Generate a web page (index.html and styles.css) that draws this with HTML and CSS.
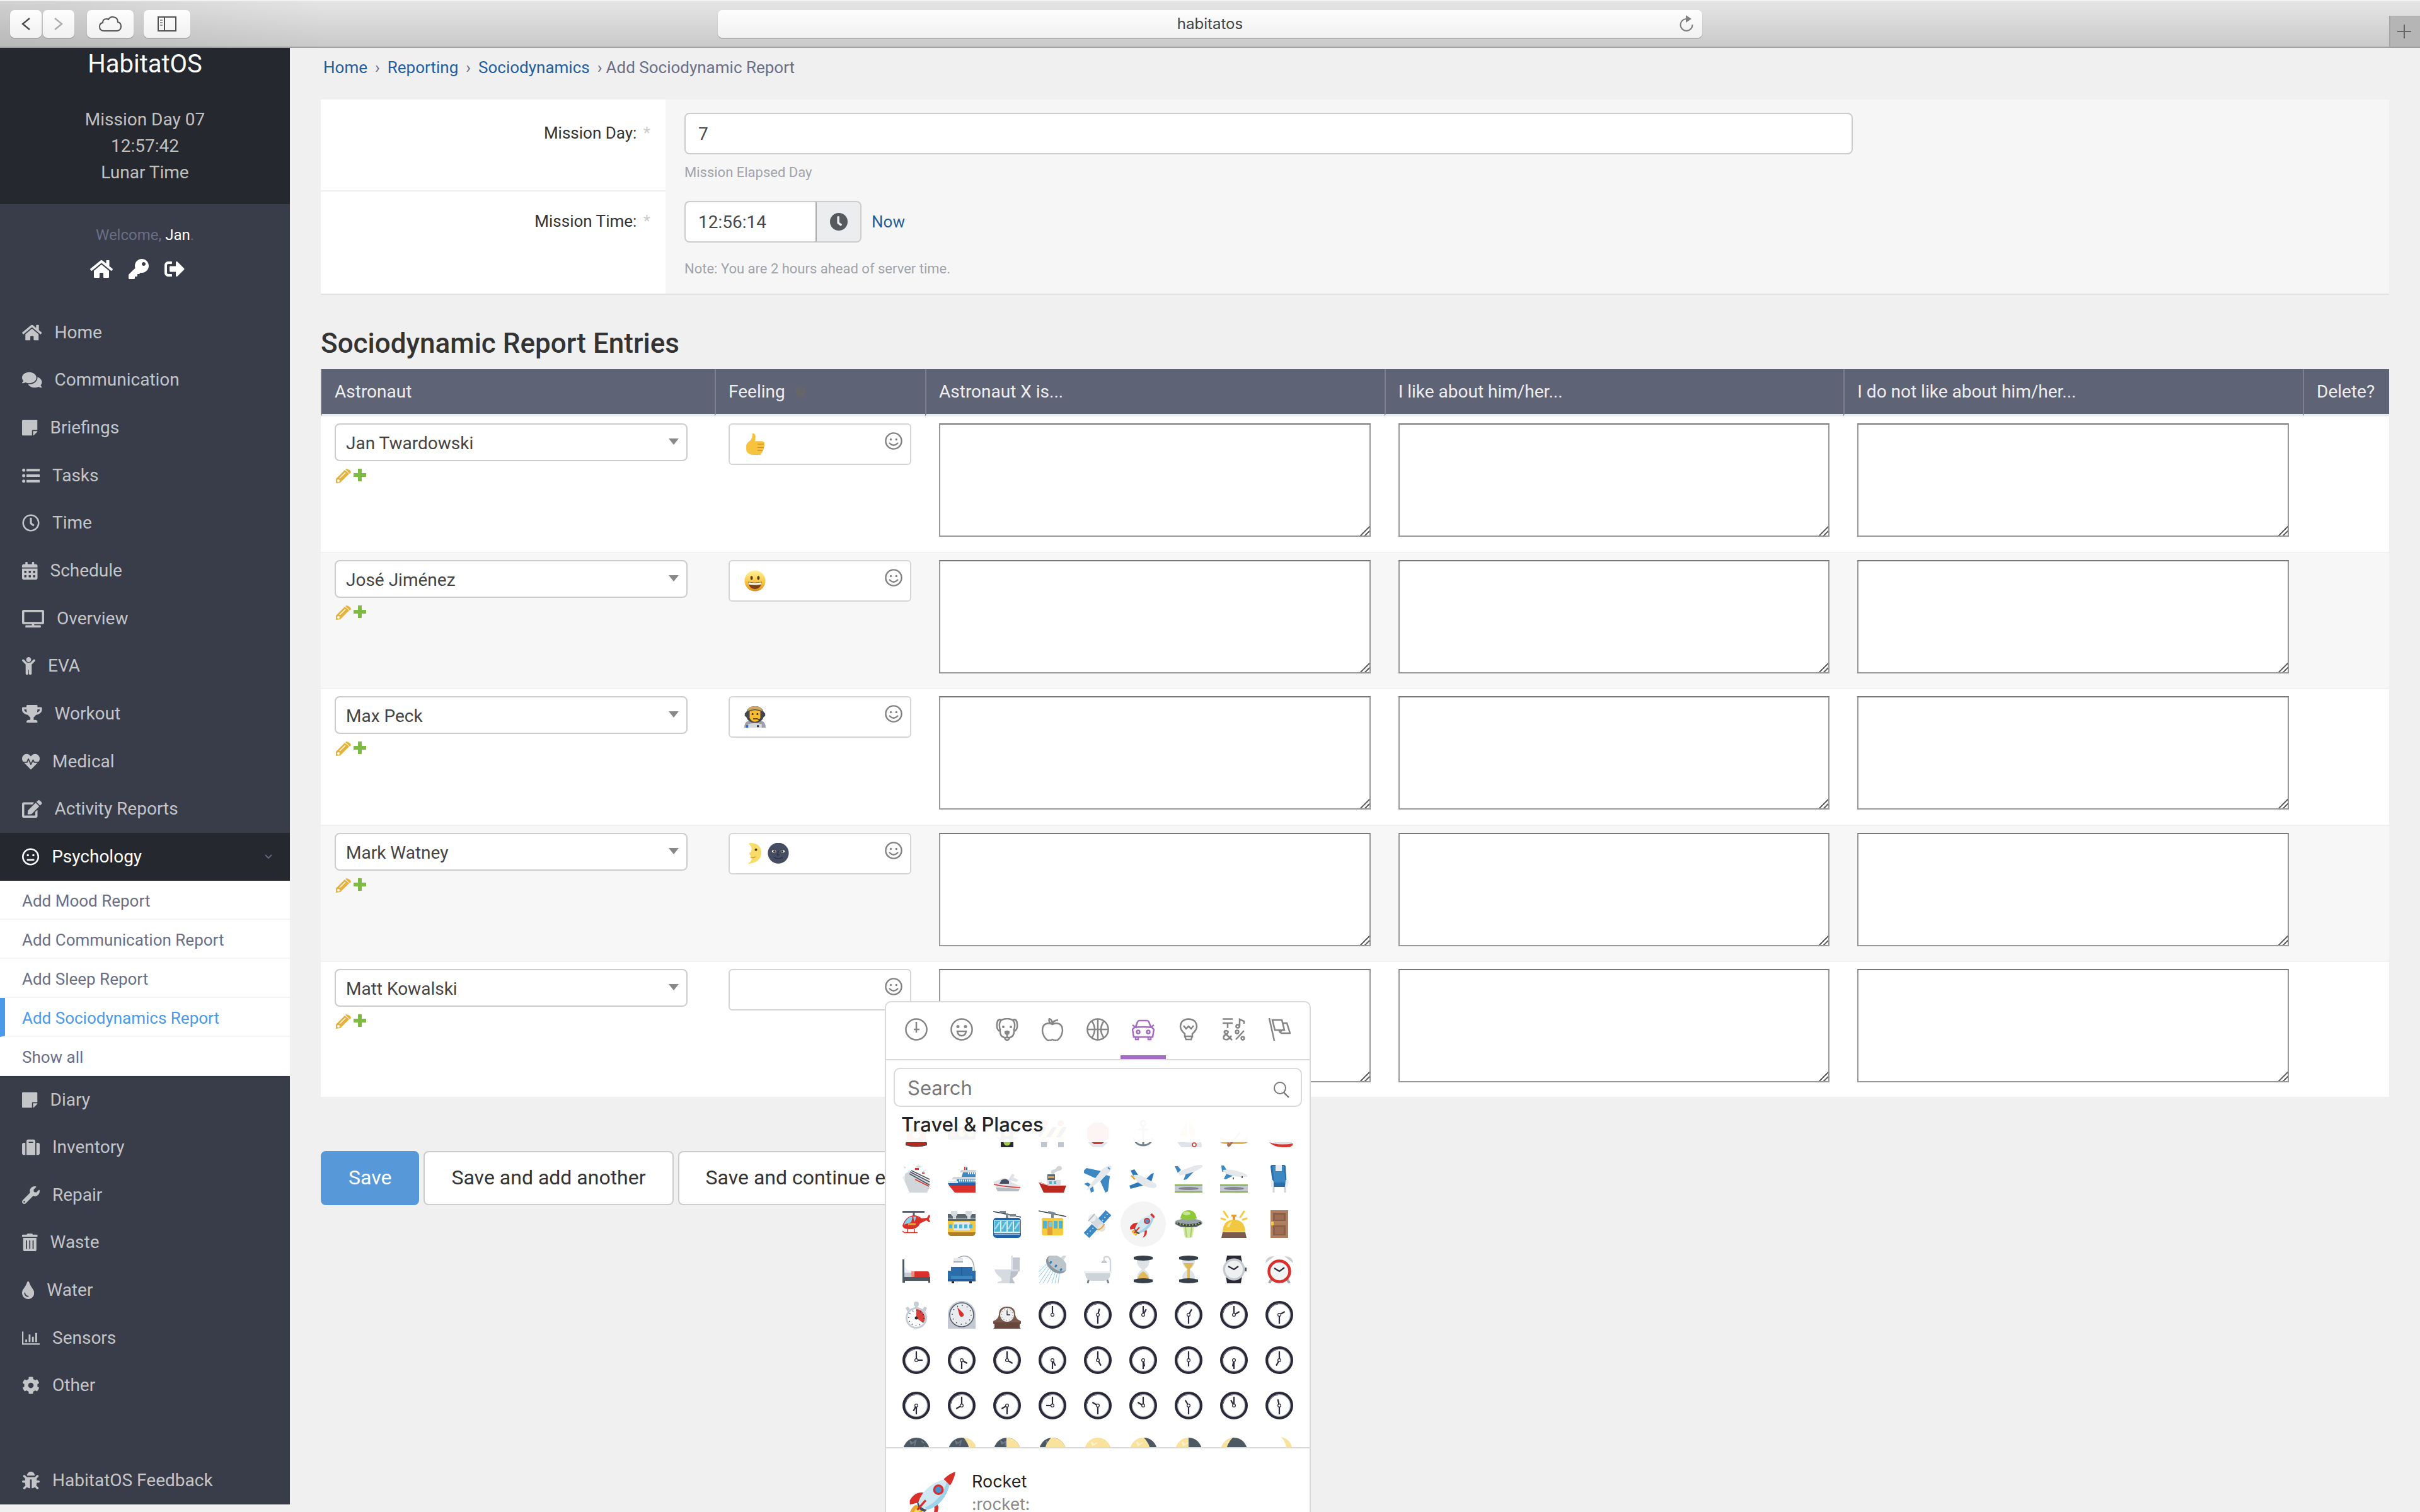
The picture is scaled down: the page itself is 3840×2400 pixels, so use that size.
FILE: index.html
```html
<!DOCTYPE html>
<html lang="en">
<head>
<meta charset="utf-8">
<title>HabitatOS</title>
<link rel="stylesheet" href="styles.css">
</head>
<body>
<svg class="sprite" aria-hidden="true">
  <symbol id="home" viewBox="0 0 576 512"><path d="M280.370 148.260L96 300.110V464a16 16 0 0 0 16 16l112.060-.29a16 16 0 0 0 15.920-16V368a16 16 0 0 1 16-16h64a16 16 0 0 1 16 16v95.640a16 16 0 0 0 16 16.050L464 480a16 16 0 0 0 16-16V300L295.670 148.260a12.190 12.190 0 0 0-15.300 0zM571.600 251.470L488 182.560V44.050a12 12 0 0 0-12-12h-56a12 12 0 0 0-12 12v72.610L318.470 43a48 48 0 0 0-61 0L4.340 251.470a12 12 0 0 0-1.600 16.900l25.500 31A12 12 0 0 0 45.150 301l235.220-193.740a12.190 12.190 0 0 1 15.300 0L530.900 301a12 12 0 0 0 16.900-1.600l25.500-31a12 12 0 0 0-1.700-16.930z"/></symbol>
  <symbol id="note" viewBox="0 0 448 512"><path d="M312 320h136V56c0-13.300-10.700-24-24-24H24C10.700 32 0 42.700 0 56v400c0 13.300 10.700 24 24 24h264V344c0-13.200 10.800-24 24-24zm129 55l-98 98c-4.500 4.500-10.600 7-17 7h-6V352h128v6.100c0 6.300-2.500 12.400-7 16.900z"/></symbol>
  <symbol id="pencil" viewBox="0 0 24 23"><path fill="#e6b23e" d="M0 23v-7L14 2l7 6L7 22zM15 1l2-1q7 2 7 6l-2 2z"/><path stroke="#fff" stroke-width="1.400" d="M6 15l9-9"/><circle cx="4" cy="19" r="2" fill="#fff"/></symbol>
  <symbol id="plus" viewBox="0 0 20 20"><path fill="#7ebb42" d="M7 0h6v7h7v6h-7v7H7v-7H0V7h7z"/></symbol>
  <symbol id="smile" viewBox="0 0 28 28"><g fill="none" stroke="#828282" stroke-width="2.400"><circle cx="14" cy="14" r="12.600"/><path d="M7.600 17.500q6.400 6.400 12.800 0" stroke-linecap="round"/></g><circle cx="9.500" cy="11.500" r="1.700" fill="#828282"/><circle cx="18.300" cy="11.500" r="1.700" fill="#828282"/></symbol>

  <!-- clock parts -->
  <symbol id="face" viewBox="0 0 44 44"><circle cx="22" cy="22" r="18" fill="#fff" stroke="#a9b4b8" stroke-width="2.400"/><circle cx="22" cy="22" r="20" fill="none" stroke="#2b2937" stroke-width="4"/><path d="M5 19A17 17 0 0 1 20 5" fill="none" stroke="#55525f" stroke-width="1"/></symbol>
  <symbol id="hub" viewBox="0 0 44 44"><circle cx="22" cy="22" r="2.400" fill="#fff" stroke="#2b2937" stroke-width="1.200"/></symbol>

  <!-- traffic and boats -->
  <symbol id="e-light" viewBox="0 0 44 44"><path d="M9 14q2-4 5-4h16q4 0 5 4l4 24H5z" fill="#d9362f"/><path d="M5 37h34v4q-17 5-34 0z" fill="#454d57"/><path d="M7 35h30l1 5q-16 4-32 0z" fill="#b8281f"/><circle cx="22" cy="24" r="6" fill="#fff" opacity=".8"/></symbol>
  <symbol id="e-hlight" viewBox="0 0 44 44"><rect y="12" width="44" height="20" rx="3" fill="#2b2937"/><circle cx="8" cy="22" r="5.500" fill="#d9362f"/><circle cx="22" cy="22" r="5.500" fill="#f2c843"/><circle cx="36" cy="22" r="5.500" fill="#83bf4f"/></symbol>
  <symbol id="e-vlight" viewBox="0 0 44 44"><path d="M6 12l6 4v-4zM38 12l-6 4v-4zM4 28l8 5v-5zM40 28l-8 5v-5z" fill="#75908f"/><rect x="12" width="20" height="44" fill="#2b2937"/><circle cx="22" cy="7" r="5" fill="#d9362f"/><circle cx="22" cy="22" r="5" fill="#f2c843"/><circle cx="22" cy="36" r="5.500" fill="#9ccc3f"/></symbol>
  <symbol id="e-barrier" viewBox="0 0 44 44"><circle cx="10" cy="6" r="5" fill="#d9362f"/><circle cx="35" cy="6" r="5" fill="#d9362f"/><path fill="#c0c6d0" d="M4 28h9v16H4zM31 28h9v16h-9z"/><path fill="#ffe062" d="M0 12h44v16H0z"/><path fill="#2b2937" d="M6 12h7L3 28H0v-6zM22 12h7L19 28h-7zM38 12h6v2l-9 14h-7z"/></symbol>
  <symbol id="e-stop" viewBox="0 0 44 44"><path fill="#e3e6ea" d="M14 44L2 32V12L14 2h16l12 10v20L30 44z"/><path fill="#d9362f" d="M16 39L5 30V14l10-9h14l10 9v16L28 39z"/></symbol>
  <symbol id="e-anchor" viewBox="0 0 44 44"><g fill="none" stroke="#75848d" stroke-width="3"><circle cx="22" cy="6" r="4"/><path d="M22 10v31M13 16h18M7 29q3 12 15 12t15-12"/></g></symbol>
  <symbol id="e-sail" viewBox="0 0 44 44"><path fill="#f2c87e" d="M20 2l-14 24h14zM23 2q12 14 10 25l-10-1z"/><path fill="#dfe4e8" d="M3 34q20 4 39 2l1 8H10z"/><circle cx="31" cy="40" r="3" fill="#fff" stroke="#d9362f" stroke-width="1.600"/></symbol>
  <symbol id="e-canoe" viewBox="0 0 44 44"><path fill="#e8b24d" d="M0 26q8 6 16 6h14q8 0 14-6v10q-4 3-10 3H10q-6 0-10-3z"/><path d="M32 20L14 42" stroke="#a97155" stroke-width="3"/><path d="M12 36l6 4-5 4-2-3z" fill="#a97155"/></symbol>
  <symbol id="e-speed" viewBox="0 0 44 44"><path fill="#dce3e6" d="M0 26q12-2 20 6l22 4v4H18z"/><path fill="#d9362f" d="M6 36q16 6 38 2-1 6-10 6-20 1-28-8z"/></symbol>

  <symbol id="e-cruise" viewBox="0 0 44 44"><path fill="#e6eaec" d="M0 20l12-12 3 36H12z"/><path fill="#d0d6d9" d="M4 14l8-4 31 18v8l-4 8H11L4 26z"/><path stroke="#4b5563" stroke-width="1.600" d="M14 9l29 14M12 11l31 16M11 14l32 18"/><path stroke="#d9362f" stroke-width="1.400" d="M20 23l22 11"/><path fill="#d9362f" d="M20 5h6v3h-6zM31 12h4v2h-4z"/><path fill="#d5dbe0" d="M21 4q2-5 8-2l1 2zM32 11q2-4 5-1zM2 2l4 2-3 2z"/></symbol>
  <symbol id="e-ferry" viewBox="0 0 44 44"><path fill="#d9362f" d="M26 3h2v6h-2z"/><path fill="#2f6fae" d="M29 4h2v5h-2z"/><path fill="#d0d6d9" d="M21 8h23v4H19zM9 19h35v4H6z"/><path fill="#3b88c3" d="M24 12h20v7H22zM14 23h30v7H14z"/><path d="M32 13.500h12M18 25h26" stroke="#eef2f4" stroke-width="3" stroke-dasharray="2 1"/><path fill="#dde5ea" d="M0 26h16v3H0z"/><path fill="#2a62a8" d="M0 29h44v4H2z"/><path fill="#d9302c" d="M2 33h42v11H11z"/></symbol>
  <symbol id="e-motor" viewBox="0 0 44 44"><path fill="#dfe3e8" d="M24 24l6-10 4 2-2 4 8 4-3 3zM0 27l16-6q10 1 14 7l14 6-4 8H8z"/><path d="M13 24q8-4 12 2v4H10z" fill="#454d62"/><path d="M1 31q18 4 42 5" stroke="#d9362f" stroke-width="1.500" fill="none"/><path d="M4 36l3 6h33l2-4z" fill="#b5bcc2"/></symbol>
  <symbol id="e-tug" viewBox="0 0 44 44"><path fill="#cfd6da" d="M20 14q-2-7 7-7 2-6 8-5 5 4-1 7-5 1-8 3l-2 3z"/><path fill="#5a6670" d="M14 15h12v12H14z"/><path fill="#e8a23a" d="M15 18h10v3H15z"/><path fill="#d5dbe0" d="M14 24h21v9H14z"/><path fill="#4fb3d3" d="M17 26h4v4h-4zM24 26h4v4h-4z"/><path fill="#b8281f" d="M0 27l16 5h28l-4 12H8z"/><path d="M0 28l16 4.500h28" fill="none" stroke="#f0dede"/></symbol>
  <symbol id="e-plane" viewBox="0 0 44 44"><path fill="#3b88c3" d="M0 9l4-4 24 5-8 12-20-9zM35 16l-9 10 8 18 4-2 3-24zM0 30l6-2 8 5 2 9-5 2-2-8z"/><path fill="#e4e8eb" d="M4 39L28 8Q36 0 43 1q2 7-6 14L12 36q-6 5-8 3z"/><path d="M38 4l3 3" stroke="#3b88c3" stroke-width="2"/></symbol>
  <symbol id="e-splane" viewBox="0 0 44 44"><path fill="#2f78bb" d="M2 9l6-2 6 9-7 3zM0 33l18-7 10 5-26 7zM27 22l8-8 4-1-5 17z"/><path fill="#e4e8eb" d="M6 16q12-1 20 5l16 9q4 6-4 7-13-1-24-9z"/><path stroke="#e8a23a" stroke-width="2.500" d="M3 17l6 6"/></symbol>
  <symbol id="e-depart" viewBox="0 0 44 44"><path fill="#3b88c3" d="M0 2h5l5 6-5 5zM20 8l12 1-13 14-5 1z"/><path fill="#e4e8eb" d="M5 12Q26 2 37 0q8-1 7 3Q34 12 8 17z"/><path fill="#83b24a" d="M0 31h44v13H0z"/><path fill="#c4c8d3" d="M0 33h44v9H0z"/><ellipse cx="22" cy="37.500" rx="16" ry="2.600" fill="#84868f"/></symbol>
  <symbol id="e-arrive" viewBox="0 0 44 44"><path fill="#3b88c3" d="M2 1h4l5 8-8 2zM13 9l10 2 2 4-16 8-3-1z"/><path fill="#e4e8eb" d="M4 8q16-2 33 5 8 3 6 6-16 2-34-5z"/><path d="M21 20v3M35 18v3" stroke="#565a66" stroke-width="2"/><path fill="#83b24a" d="M0 31h44v13H0z"/><path fill="#c4c8d3" d="M0 33h44v9H0z"/><ellipse cx="22" cy="37.500" rx="16" ry="2.600" fill="#84868f"/></symbol>
  <symbol id="e-seat" viewBox="0 0 44 44"><path d="M13 34v10M31 34v10" stroke="#cfd5da" stroke-width="3"/><path fill="#2b6cab" d="M8 3q0-3 3-3h18q3 0 3 3l2 32H12z"/><path fill="#3b88c3" d="M11 2h18l3 26H14z"/><path fill="#e8edf1" d="M16 0h10v10H16zM8 24q4-2 5 3v8H9zM32 24q5-1 5 3l-2 8h-4z"/></symbol>

  <symbol id="e-heli" viewBox="0 0 44 44"><path stroke="#55606c" stroke-width="3" d="M0 2.500h35M18 2v8"/><path fill="#d9302c" d="M0 24Q6 8 20 8q8 2 10 5l9-1 3-5 2 2-2 5 2 4-2 1-4-3-10 5q-4 8-12 9H8q-8-1-8-6z"/><path fill="#8bd0ea" d="M2 23Q7 10 16 10l-2 9zM17 10h5l-3 9z"/><path stroke="#e8a23a" stroke-width="3" d="M9 22h12"/><path fill="none" stroke="#d9302c" stroke-width="1.500" d="M8 30v5M19 30v5M0 33l3 2.500h21"/></symbol>
  <symbol id="e-susp" viewBox="0 0 44 44"><path fill="#59656f" d="M0 6h44v6H0zM0 13h44v5H0z"/><path fill="#d5dade" d="M5 1h10v6l-2 3v4H8v-4L5 7zM28 1h10v6l-2 3v4h-5v-4l-3-3z"/><path fill="#f2c843" d="M0 17h44v18q0 5-5 5H5q-5 0-5-5z"/><path fill="#b17e22" d="M0 35h44q-1 6-6 6H6q-5 0-6-6z"/><path fill="#e4e8eb" d="M9 19h26v13H9z"/><path d="M2 25.500h40" stroke="#4fb3d3" stroke-width="6" stroke-dasharray="5 3"/></symbol>
  <symbol id="e-cable" viewBox="0 0 44 44"><path stroke="#35404a" stroke-width="1.500" d="M0 2l44 9"/><path d="M10 3h10M26 8h10M22 5v9" stroke="#7b8790" stroke-width="4"/><rect y="12" width="44" height="32" rx="5" fill="#2463a5"/><path fill="#e4edf2" d="M1 16h42v20H1z"/><path fill="#4fb3d3" d="M2 17h9v17H2zM13 17h8v17h-8zM23 17h8v17h-8zM33 17h9v17h-9z"/><path stroke="#a5dced" stroke-width="2.500" d="M3 30l7-11M14 30l6-11M24 30l6-11M34 30l7-11"/><path stroke="#fff" d="M2 38h40"/></symbol>
  <symbol id="e-tram" viewBox="0 0 44 44"><path stroke="#35404a" stroke-width="1.500" d="M0 1l44 9"/><path d="M15 3l12 3M22 4v9" stroke="#7b8790" stroke-width="4"/><rect x="5" y="12" width="34" height="28" rx="3" fill="#f5cb3f"/><path fill="#4fb3d3" d="M7 17h6v12H7zM24 17h6v12h-6zM32 17h6v12h-6z"/><path fill="#e29b36" d="M14 17h8v22h-8z"/><path fill="#7ac7dd" d="M16 19h5v7h-5z"/></symbol>
  <symbol id="e-sat" viewBox="0 0 44 44"><path stroke="#3b88c3" stroke-width="12" d="M4 40l13-14M27 17L39 4"/><path stroke="#bfe0f5" stroke-width="2" stroke-dasharray="2 4" d="M5 38l11-11M29 17L38 5"/><path stroke="#d3d9de" stroke-width="13" d="M13 12l16 16"/><circle cx="13" cy="12" r="6" fill="#eceff1"/><path d="M7 17L17 6" stroke="#b5bcc2" stroke-width="2"/><circle cx="28" cy="28" r="6" fill="#e9e2d8"/><path d="M21 31q8-1 11-9" stroke="#e8a23a" stroke-width="2" fill="none"/></symbol>
  <symbol id="e-rocket" viewBox="0 0 44 44"><path fill="#d9302c" d="M15 20Q6 18 1 27v4l9-2zM24 33q1 5-3 11 7-3 7-11l-2-4z"/><path fill="#f2a52c" d="M7 31q-6 3-7 13 10-1 13-7z"/><path fill="#fbdc5a" d="M8 34q-3 2-4 7 6-2 7-5z"/><path fill="#484f5a" d="M8 29l3-3 8 8-4 4q-7-2-7-9z"/><path fill="#cfe9f4" d="M9 29Q14 13 34 7l4 5q-4 19-21 24-7-2-8-7z"/><path fill="#9fd3ea" d="M36 9l3 2q-5 20-21 25l-3-2Q32 26 36 9z"/><path fill="#d9302c" d="M44 0q-6 2-11 7l6 6q4-6 5-13z"/><circle cx="28" cy="17" r="5" fill="#d9302c"/><circle cx="28" cy="17" r="3" fill="#4a8fd0"/><path stroke="#d9302c" stroke-width="2" d="M8 36l8-9"/></symbol>
  <symbol id="e-ufo" viewBox="0 0 44 44"><path fill="#d4eaa8" d="M13 26h18l-3 17q-6 2-12 0z"/><path stroke="#a8cf64" stroke-width="2" d="M17 27l2 16M27 27l-2 16"/><ellipse cx="22" cy="20" rx="22" ry="7" fill="#97a2a8"/><path d="M2 22q20 8 40 0l-8 5H10z" fill="#616d74"/><path d="M2 20q20 8 40 0" stroke="#3e444c" stroke-width="4" fill="none"/><path d="M3 20q19 7 38 0" stroke="#b4d94f" stroke-width="2" stroke-dasharray="2 3" fill="none"/><path fill="#8fc93a" d="M9 13Q11 0 22 0t13 13q-13 5-26 0z"/><ellipse cx="19" cy="5" rx="6" ry="3" fill="#c5e68c"/></symbol>
  <symbol id="e-bell" viewBox="0 0 44 44"><path stroke="#f5c944" stroke-width="3" stroke-linecap="round" d="M6 2l6 9M38 2l-6 9M2 13l6 2M42 13l-6 2"/><path fill="#e29b36" d="M18 7h8v3h-2v6h-4v-6h-2z"/><path fill="#f2c843" d="M4 34q1-19 18-19t18 19z"/><path fill="#fbe38a" d="M10 27q2-8 9-9-3 4-4 9z"/><path fill="#7a5a4d" d="M4 35h36l2 9H2z"/></symbol>
  <symbol id="e-door" viewBox="0 0 44 44"><path fill="#b07f5f" d="M8 0h28v44H8z"/><path fill="#8a6048" d="M12 4h20v13H12zM12 24h20v16H12z"/><path fill="#9d6e53" d="M15 7h14v8H15zM15 27h14v11H15z"/><path fill="#f2c843" d="M9 18h4v6H9z"/></symbol>

  <symbol id="e-bed" viewBox="0 0 44 44"><path fill="#4d5962" d="M0 6h3v28h41v9h-3v-3H4v3H0z"/><path fill="#c4cad3" d="M3 26h16v8H3z"/><path fill="#eef1f3" d="M3 17l5 6 6 1q3 2 0 3H3z"/><path fill="#d9302c" d="M18 25h22q3 0 3 9H18z"/><path fill="#ea8d7e" d="M14 25h5v9h-5z"/></symbol>
  <symbol id="e-couch" viewBox="0 0 44 44"><path d="M16 4Q26-2 34 3t8 21" fill="none" stroke="#a3acb2" stroke-width="1.600"/><path fill="#e4e8eb" d="M9 4h15v6H9z"/><path fill="#a3acb2" d="M9 9h15v2H9z"/><path fill="#2b6cab" d="M5 18h34v15H5zM0 24h5v16H0zM39 24h5v16h-5z"/><path fill="#3b88c3" d="M5 32h34v5H5z"/><path fill="#245d98" d="M0 37h44v4H0zM21 18h2v14h-2z"/><path fill="#2b2937" d="M6 41h4v3H6zM34 41h4v3h-4z"/></symbol>
  <symbol id="e-toilet" viewBox="0 0 44 44"><path fill="#dfe3e8" d="M28 0h3v22h-3z"/><path fill="#c4c8d3" d="M31 3h11v22H31z"/><path fill="#d5dbe0" d="M2 22h38q-2 9-10 14l4 6v2H7v-2l6-2q1-4-2-6-7-4-9-12z"/><path fill="#b9c0ca" d="M28 25h12q-2 8-10 11l4 8h-8z"/></symbol>
  <symbol id="e-shower" viewBox="0 0 44 44"><path stroke="#8cc8ea" stroke-width="1" d="M13 13L0 26M15 16L0 34M18 18L1 44M21 21L7 44M24 23L14 44M27 25l-6 19M30 26l-4 18M33 28l-2 16"/><path fill="#d3d9dd" d="M34 4l5-4h5L40 7z"/><ellipse cx="28" cy="14" rx="18" ry="12" transform="rotate(38 28 14)" fill="#8b979e"/><ellipse cx="30" cy="12" rx="17" ry="10" transform="rotate(38 30 12)" fill="#bcc5ca"/><path stroke="#2f78bb" stroke-width="4" stroke-dasharray="3 7" d="M18 10l20 14"/></symbol>
  <symbol id="e-bath" viewBox="0 0 44 44"><path d="M42 26V8q-2-9-10-5v6" fill="none" stroke="#d0d6da" stroke-width="2.400"/><path fill="#c4cbd0" d="M27 12l2-4h6l2 4z"/><path d="M8 36l-2 8M36 36l3 8" stroke="#7b8790" stroke-width="3"/><path fill="#cdd4d8" d="M2 27h40q0 13-11 13H13Q2 40 2 27z"/><path fill="#eceff1" d="M0 25h44v3H0z"/></symbol>
  <symbol id="e-hour" viewBox="0 0 44 44"><path fill="#dde3e7" d="M12 6h20q1 10-8 16 9 6 8 16H12q-1-10 8-16-9-6-8-16z"/><path fill="#e2b95a" d="M13 37q2-8 9-12 7 4 9 12z"/><path fill="#37404a" d="M7 2q15-4 30 0v4q-15 4-30 0zM7 38q15-4 30 0v4q-15 4-30 0z"/></symbol>
  <symbol id="e-hourf" viewBox="0 0 44 44"><path fill="#dde3e7" d="M12 6h20q1 10-8 16 9 6 8 16H12q-1-10 8-16-9-6-8-16z"/><path fill="#e2b95a" d="M14 12h16q-2 5-6 9v16h-4V21q-4-4-6-9z"/><path fill="#37404a" d="M7 2q15-4 30 0v4q-15 4-30 0zM7 38q15-4 30 0v4q-15 4-30 0z"/></symbol>
  <symbol id="e-watch" viewBox="0 0 44 44"><path fill="#2b2937" d="M11 0h22l2 12v20l-2 12H11L9 32V12z"/><path fill="#454d57" d="M38 19h4v6h-4z"/><circle cx="22" cy="22" r="17.500" fill="#c3cbcf"/><circle cx="22" cy="22" r="14" fill="#eef0f2"/><path d="M13 17l9 5 7-5" fill="none" stroke="#2b2937" stroke-width="2.200"/></symbol>
  <symbol id="e-alarm" viewBox="0 0 44 44"><path d="M9 38l-3 6M35 38l3 6" stroke="#a3acb2" stroke-width="4"/><path fill="#c9d0d4" d="M0 12Q1 1 14 1zM44 12Q43 1 30 1z"/><circle cx="22" cy="25" r="16.500" fill="#f1f3f5" stroke="#d9302c" stroke-width="4.500"/><path d="M14 20l8 5 8-6" fill="none" stroke="#2b2937" stroke-width="2.200"/></symbol>

  <symbol id="e-stopw" viewBox="0 0 44 44"><circle cx="22" cy="5" r="4" fill="#c5ccd3"/><path fill="#c5ccd3" d="M20 6h4v6h-4zM5 11l4-2 3 4-4 4zM39 11l-4-2-3 4 4 4z"/><circle cx="22" cy="27" r="15.500" fill="#fff" stroke="#c5ccd9" stroke-width="3"/><path fill="#d9403a" d="M22 27V13a14 14 0 0 1 11 22z"/><circle cx="22" cy="27" r="12" fill="none" stroke="#2b2937" stroke-width="2" stroke-dasharray="1 5.280"/><circle cx="22" cy="27" r="2.500" fill="#2b2937"/></symbol>
  <symbol id="e-timer" viewBox="0 0 44 44"><path fill="#c4c8d3" d="M0 22a22 22 0 0 1 44 0v22H0z"/><circle cx="22" cy="22" r="19" fill="#e9ecee" stroke="#53606a" stroke-width="1.600"/><circle cx="22" cy="22" r="15" fill="none" stroke="#2b2937" stroke-width="1.600" stroke-dasharray="1.300 6.554"/><path fill="#d9302c" d="M15 10l9 9q3 4-1 6-4 1-5-4z"/></symbol>
  <symbol id="e-mantel" viewBox="0 0 44 44"><path fill="#7a5a4d" d="M9 22Q9 9 22 9t13 13q1 7 9 10v4H0v-4q8-3 9-10z"/><path fill="#66483c" d="M0 34h44v2l-2 1v5l2 2H0l2-2v-5l-2-1z"/><circle cx="22" cy="22" r="11" fill="#eef0f2"/><circle cx="22" cy="22" r="9" fill="none" stroke="#2b2937" stroke-dasharray="1 3.710"/><path d="M22 15v7h5" fill="none" stroke="#2b2937" stroke-width="1.300"/></symbol>

  <!-- moon phases -->
  <symbol id="m-dark" viewBox="0 0 44 44"><circle cx="22" cy="22" r="21" fill="#4c5964"/><path d="M14 12l-2-6 4 4 5-4-2 8M30 6l4 4M34 14l3 3" stroke="#6f7b85" stroke-width="2" fill="none"/></symbol>
  <symbol id="m-full" viewBox="0 0 44 44"><circle cx="22" cy="22" r="21" fill="#f9e29c"/><path d="M14 14l-2-6 4 4 5-3" stroke="#fff1d0" stroke-width="2" fill="none"/></symbol>

  <!-- faces shown inside the feeling fields -->
  <symbol id="f-thumb" viewBox="0 0 44 44"><path fill="#f7c33f" d="M17 0q5-1 6 6 0 6-1 10h14q7 1 5 6 2 4-1 7 1 4-2 6 0 4-3 5 0 4-4 4H19Q4 43 4 33V24q2-5 9-10 4-6 4-14z"/><path fill="none" stroke="#c98a22" stroke-width="1.500" d="M27 22h13M27 29h13M27 35h11"/></symbol>
  <symbol id="f-grin" viewBox="0 0 44 44"><defs><linearGradient id="g1" x2="0" y2="1"><stop stop-color="#fff39a"/><stop offset=".6" stop-color="#f7c33f"/><stop offset="1" stop-color="#dd8a1f"/></linearGradient></defs><circle cx="22" cy="22" r="21.500" fill="url(#g1)"/><ellipse cx="15" cy="16" rx="2.500" ry="4" fill="#5f3d11"/><ellipse cx="29" cy="16" rx="2.500" ry="4" fill="#5f3d11"/><path fill="#7a4410" d="M8 24q14 3 28 0-2 15-14 15T8 24z"/><path fill="#fff" d="M9 25q13 3 26 0v4q-13 3-26 0z"/></symbol>
  <symbol id="f-astro" viewBox="0 0 44 44"><path fill="#9da0a8" d="M0 44q0-11 8-14h28q8 3 8 14z"/><path fill="#43464d" d="M4 12Q8 0 22 0t18 12l3 3v5l-3 2q-4 12-18 12T4 22l-3-2v-5z"/><path fill="#d0a862" d="M6 10Q9 0 22 0t16 10q-16-7-32 0z"/><path fill="#f9bd2d" d="M11 10q11-4 22 0v14q-4 8-11 8t-11-8z"/><circle cx="17" cy="16" r="2" fill="#4b2e0d"/><circle cx="27" cy="16" r="2" fill="#4b2e0d"/><path d="M18 26h9l6 3" stroke="#3a2a1c" stroke-width="2" fill="none"/><path fill="#d5d7dc" d="M8 37q14-5 28 0v7H8z"/><path fill="#2d63d0" d="M4 39h4v5H4z"/><path fill="#33363c" d="M26 39h4v4h-4z"/></symbol>
  <symbol id="f-moon" viewBox="0 0 44 44"><path fill="#f8dc67" d="M12 0q22 0 23 20 0 20-28 23 9-6 8-11l-4-3 3-2q-4-4-4-6 5-2 5-9 0-6-6-10z"/><circle cx="24" cy="14" r="2.600" fill="#4b3a12"/><path d="M14 29q6 3 9-1" stroke="#c79a2c" stroke-width="2" fill="none"/></symbol>
  <symbol id="f-dark" viewBox="0 0 44 44"><circle cx="22" cy="21" r="21.500" fill="#454d63"/><ellipse cx="13" cy="17" rx="4" ry="2.600" fill="#fff"/><ellipse cx="31" cy="17" rx="4" ry="2.600" fill="#fff"/><circle cx="14" cy="17" r="2.200" fill="#3c2a26"/><circle cx="30" cy="17" r="2.200" fill="#3c2a26"/><path d="M22 16l-2 9h4M13 29q9 7 18 0" stroke="#2d3344" stroke-width="1.800" fill="none"/></symbol>
</svg>

<header class="toolbar">
  <div class="tools">
    <button class="tool tool-narrow" aria-label="Back"><svg viewBox="0 0 14 20" width="14" height="20"><path d="M13 1L2 10l11 9" fill="none" stroke="#4a4a4a" stroke-width="2.400"/></svg></button>
    <button class="tool tool-narrow" aria-label="Forward"><svg viewBox="0 0 14 20" width="14" height="20"><path d="M1 1l11 9-11 9" fill="none" stroke="#ababab" stroke-width="2.400"/></svg></button>
    <button class="tool tool-cloud" aria-label="iCloud tabs"><svg viewBox="0 0 36 26" width="36" height="26"><path d="M8 24q-7 0-7-7 0-5 5-6 0-6 6-6 2 0 3 1 3-5 8-4 7 1 7 8 5 1 5 7t-6 7z" fill="none" stroke="#555" stroke-width="2"/></svg></button>
    <button class="tool" aria-label="Show sidebar"><svg viewBox="0 0 30 24" width="30" height="24"><path d="M1 1h28v22H1zM11 1v22" fill="none" stroke="#4f4f4f" stroke-width="2"/><path d="M4 6h4M4 10h4M4 14h4" stroke="#777" stroke-width="1.600"/></svg></button>
  </div>
  <div class="address"><span>habitatos</span><button class="reload" aria-label="Reload"><svg viewBox="0 0 24 28" width="24" height="28"><path d="M11 6A9.500 9.500 0 1 0 21.500 15" fill="none" stroke="#808080" stroke-width="2.200"/><path d="M11 0l9 6-9 6z" fill="#808080"/></svg></button></div>
  <button class="newtab" aria-label="New tab"><svg viewBox="0 0 22 22" width="22" height="22"><path d="M11 0v22M0 11h22" stroke="#666" stroke-width="2"/></svg></button>
</header>

<div class="layout">
<aside class="sidebar">
  <div class="brand">
    <h1>HabitatOS</h1>
    <p>Mission Day 07<br>12:57:42<br>Lunar Time</p>
  </div>
  <p class="welcome">Welcome, <b>Jan</b>.</p>
  <div class="user-links">
    <a href="#" aria-label="View site"><svg viewBox="0 0 576 512"><use href="#home"/></svg></a>
    <a href="#" aria-label="Change password"><svg viewBox="0 0 512 512"><path d="M512 176.001C512 273.203 433.202 352 336 352c-11.220 0-22.190-1.062-32.827-3.069l-24.012 27.014A23.999 23.999 0 0 1 261.223 384H224v40c0 13.255-10.745 24-24 24h-40v40c0 13.255-10.745 24-24 24H24c-13.255 0-24-10.745-24-24v-78.059c0-6.365 2.529-12.470 7.029-16.971l161.802-161.802C163.108 213.814 160 195.271 160 176 160 78.798 238.797.001 335.999 0 433.488-.001 512 78.511 512 176.001zM336 128c0 26.510 21.490 48 48 48s48-21.490 48-48-21.490-48-48-48-48 21.490-48 48z"/></svg></a>
    <a href="#" aria-label="Log out"><svg viewBox="0 0 512 512"><path d="M497 273L329 441c-15 15-41 4.500-41-17v-96H152c-13.300 0-24-10.700-24-24v-96c0-13.300 10.700-24 24-24h136V88c0-21.400 25.900-32 41-17l168 168c9.300 9.400 9.300 24.600 0 34zM192 436v-40c0-6.600-5.400-12-12-12H96c-17.700 0-32-14.300-32-32V160c0-17.700 14.300-32 32-32h84c6.600 0 12-5.400 12-12V76c0-6.600-5.400-12-12-12H96c-53 0-96 43-96 96v192c0 53 43 96 96 96h84c6.600 0 12-5.400 12-12z"/></svg></a>
  </div>
  <nav>
    <ul class="menu menu-main">
      <li><a href="#"><svg viewBox="0 0 576 512"><use href="#home"/></svg>Home</a></li>
      <li><a href="#"><svg viewBox="0 0 576 512"><path d="M416 192c0-88.400-93.100-160-208-160S0 103.600 0 192c0 34.300 14.100 65.900 38 92-13.400 30.200-35.500 54.200-35.800 54.500-2.200 2.300-2.800 5.700-1.500 8.700S4.800 352 8 352c36.600 0 66.900-12.300 88.700-25 32.200 15.700 70.300 25 111.300 25 114.900 0 208-71.600 208-160zm122 220c23.900-26 38-57.700 38-92 0-66.900-53.500-124.200-129.300-148.100.9 6.600 1.300 13.300 1.300 20.100 0 105.900-107.700 192-240 192-10.800 0-21.300-.8-31.700-1.900C207.800 439.600 281.800 480 368 480c41 0 79.100-9.200 111.300-25 21.800 12.700 52.100 25 88.700 25 3.200 0 6.100-1.900 7.300-4.800 1.300-2.900.7-6.300-1.500-8.700-.3-.3-22.400-24.200-35.800-54.500z"/></svg>Communication</a></li>
      <li><a href="#"><svg viewBox="0 0 448 512"><use href="#note"/></svg>Briefings</a></li>
      <li><a href="#"><svg viewBox="0 0 512 512"><circle cx="48" cy="96" r="46"/><circle cx="48" cy="256" r="46"/><circle cx="48" cy="416" r="46"/><path d="M128 60h384v72H128zM128 220h384v72H128zM128 380h384v72H128z"/></svg>Tasks</a></li>
      <li><a href="#"><svg viewBox="0 0 512 512"><path d="M256 8C119 8 8 119 8 256s111 248 248 248 248-111 248-248S393 8 256 8zm0 448c-110.500 0-200-89.500-200-200S145.500 56 256 56s200 89.500 200 200-89.500 200-200 200zm61.800-104.400l-84.900-61.700c-3.100-2.300-4.900-5.900-4.900-9.700V116c0-6.600 5.400-12 12-12h32c6.600 0 12 5.400 12 12v141.700l66.800 48.600c5.400 3.900 6.500 11.400 2.600 16.800L334.600 349c-3.900 5.300-11.400 6.500-16.800 2.600z"/></svg>Time</a></li>
      <li><a href="#"><svg viewBox="0 0 448 512"><path d="M0 464c0 26.500 21.500 48 48 48h352c26.500 0 48-21.500 48-48V192H0v272zm320-196c0-6.600 5.400-12 12-12h40c6.600 0 12 5.400 12 12v40c0 6.600-5.400 12-12 12h-40c-6.600 0-12-5.400-12-12v-40zm0 128c0-6.600 5.400-12 12-12h40c6.600 0 12 5.400 12 12v40c0 6.600-5.400 12-12 12h-40c-6.600 0-12-5.400-12-12v-40zM192 268c0-6.600 5.400-12 12-12h40c6.600 0 12 5.400 12 12v40c0 6.600-5.400 12-12 12h-40c-6.600 0-12-5.400-12-12v-40zm0 128c0-6.600 5.400-12 12-12h40c6.600 0 12 5.400 12 12v40c0 6.600-5.400 12-12 12h-40c-6.600 0-12-5.400-12-12v-40zM64 268c0-6.600 5.400-12 12-12h40c6.600 0 12 5.400 12 12v40c0 6.600-5.400 12-12 12H76c-6.600 0-12-5.400-12-12v-40zm0 128c0-6.600 5.400-12 12-12h40c6.600 0 12 5.400 12 12v40c0 6.600-5.400 12-12 12H76c-6.600 0-12-5.400-12-12v-40zM400 64h-48V16c0-8.800-7.200-16-16-16h-32c-8.800 0-16 7.200-16 16v48H160V16c0-8.800-7.200-16-16-16h-32c-8.800 0-16 7.200-16 16v48H48C21.500 64 0 85.500 0 112v48h448v-48c0-26.500-21.500-48-48-48z"/></svg>Schedule</a></li>
      <li><a href="#"><svg viewBox="0 0 640 512"><path d="M592 0H48A48 48 0 0 0 0 48v320a48 48 0 0 0 48 48h240v32H112a16 16 0 0 0-16 16v32a16 16 0 0 0 16 16h416a16 16 0 0 0 16-16v-32a16 16 0 0 0-16-16H352v-32h240a48 48 0 0 0 48-48V48a48 48 0 0 0-48-48zm-16 352H64V64h512z"/></svg>Overview</a></li>
      <li><a href="#"><svg viewBox="0 0 384 512"><path d="M120 72c0-39.765 32.235-72 72-72s72 32.235 72 72c0 39.764-32.235 72-72 72s-72-32.236-72-72zm254.627 1.373c-12.496-12.497-32.758-12.497-45.254 0L242.745 160H141.254L54.627 73.373c-12.496-12.497-32.758-12.497-45.254 0-12.497 12.497-12.497 32.758 0 45.255L104 213.254V480c0 17.673 14.327 32 32 32h16c17.673 0 32-14.327 32-32V368h16v112c0 17.673 14.327 32 32 32h16c17.673 0 32-14.327 32-32V213.254l94.627-94.627c12.497-12.496 12.497-32.757 0-45.254z"/></svg>EVA</a></li>
      <li><a href="#"><svg viewBox="0 0 576 512"><path d="M552 64H448V24c0-13.300-10.700-24-24-24H152c-13.300 0-24 10.700-24 24v40H24C10.700 64 0 74.700 0 88v56c0 35.700 22.500 72.400 61.900 100.700 31.500 22.700 69.800 37.100 110 41.700C203.300 338.500 240 360 240 360v72h-48c-35.300 0-64 20.700-64 56v12c0 6.600 5.400 12 12 12h296c6.600 0 12-5.400 12-12v-12c0-35.300-28.700-56-64-56h-48v-72s36.700-21.500 68.100-73.600c40.300-4.600 78.600-19 110-41.700 39.300-28.300 61.900-65 61.900-100.700V88c0-13.300-10.700-24-24-24zM99.300 192.800C74.900 175.200 64 155.600 64 144v-16h64.200c1 32.600 5.800 61.200 12.800 86.200-15.100-5.200-29.200-12.400-41.700-21.400zM512 144c0 16.100-17.700 36.100-35.300 48.800-12.500 9-26.700 16.200-41.800 21.400 7-25 11.800-53.600 12.800-86.200H512v16z"/></svg>Workout</a></li>
      <li><a href="#"><svg viewBox="0 0 512 512"><path d="M320.200 243.800l-49.700 99.400c-6 12.100-23.400 11.700-28.900-.6l-56.900-126.300-30 71.700H60.600l182.500 186.500c7.100 7.300 18.600 7.300 25.700 0L451.400 288H342.300l-22.100-44.200zM473.700 73.900l-2.400-2.500c-51.500-52.600-135.800-52.600-187.400 0L256 100l-27.900-28.500c-51.500-52.700-135.900-52.700-187.400 0l-2.400 2.400C-10.400 123.700-12.500 203 31 256h102.400l35.900-86.200c5.400-12.900 23.600-13.100 29.400-.4l58.200 129.300 49-97.900c5.900-11.800 22.700-11.800 28.600 0l27.600 55.200H481c43.500-53 41.400-132.300-7.300-182.100z"/></svg>Medical</a></li>
      <li><a href="#"><svg viewBox="0 0 576 512"><path d="M402.600 83.200l90.200 90.200c3.800 3.800 3.800 10 0 13.800L274.400 405.600l-92.800 10.300c-12.400 1.400-22.900-9.100-21.500-21.500l10.300-92.800L388.800 83.200c3.800-3.800 10-3.800 13.800 0zm162-22.900l-48.800-48.800c-15.200-15.200-39.900-15.200-55.200 0l-35.400 35.400c-3.800 3.800-3.800 10 0 13.800l90.200 90.200c3.800 3.800 10 3.800 13.800 0l35.400-35.400c15.200-15.300 15.200-40 0-55.200zM384 346.200V448H64V128h229.800c3.200 0 6.200-1.300 8.500-3.500l40-40c7.600-7.600 2.200-20.500-8.500-20.500H48C21.500 64 0 85.500 0 112v352c0 26.500 21.500 48 48 48h352c26.500 0 48-21.500 48-48V306.200c0-10.700-12.900-16-20.500-8.500l-40 40c-2.200 2.300-3.500 5.300-3.500 8.500z"/></svg>Activity Reports</a></li>
      <li class="open"><a href="#"><svg viewBox="0 0 496 512"><path d="M248 8C111 8 0 119 0 256s111 248 248 248 248-111 248-248S385 8 248 8zm0 448c-110.300 0-200-89.700-200-200S137.700 56 248 56s200 89.700 200 200-89.700 200-200 200zm-80-216c17.700 0 32-14.300 32-32s-14.300-32-32-32-32 14.300-32 32 14.300 32 32 32zm160-64c-17.700 0-32 14.300-32 32s14.300 32 32 32 32-14.300 32-32-14.300-32-32-32zm8 144H160c-13.200 0-24 10.800-24 24s10.800 24 24 24h176c13.200 0 24-10.800 24-24s-10.800-24-24-24z"/></svg>Psychology<svg class="chevron" viewBox="0 0 12 8"><path d="M1 1l5 5 5-5" fill="none" stroke="#5f6479" stroke-width="2.200"/></svg></a></li>
    </ul>
    <ul class="submenu">
      <li><a href="#">Add Mood Report</a></li>
      <li><a href="#">Add Communication Report</a></li>
      <li><a href="#">Add Sleep Report</a></li>
      <li><a href="#" class="current">Add Sociodynamics Report</a></li>
      <li><a href="#">Show all</a></li>
    </ul>
    <ul class="menu menu-more">
      <li><a href="#"><svg viewBox="0 0 448 512"><use href="#note"/></svg>Diary</a></li>
      <li><a href="#"><svg viewBox="0 0 512 512"><path d="M128 480h256V80c0-26.500-21.500-48-48-48H176c-26.500 0-48 21.500-48 48v400zm64-384h128v32H192V96zm320 80v256c0 26.500-21.500 48-48 48h-48V128h48c26.500 0 48 21.500 48 48zM96 480H48c-26.500 0-48-21.500-48-48V176c0-26.500 21.500-48 48-48h48v352z"/></svg>Inventory</a></li>
      <li><a href="#"><svg viewBox="0 0 512 512"><path d="M507.730 109.100c-2.240-9.030-13.540-12.090-20.120-5.510l-74.360 74.360-67.880-11.310-11.310-67.880 74.360-74.360c6.620-6.620 3.430-17.900-5.660-20.160-47.380-11.740-99.550.91-136.580 37.930-39.640 39.640-50.550 97.100-34.050 147.200L18.740 402.760c-24.990 24.990-24.990 65.510 0 90.500 24.990 24.990 65.510 24.990 90.500 0l213.210-213.210c50.120 16.710 107.470 5.680 147.370-34.220 37.070-37.070 49.700-89.320 37.910-136.730zM64 472c-13.250 0-24-10.750-24-24 0-13.260 10.750-24 24-24s24 10.740 24 24c0 13.250-10.750 24-24 24z"/></svg>Repair</a></li>
      <li><a href="#"><svg viewBox="0 0 448 512"><path d="M32 464a48 48 0 0 0 48 48h288a48 48 0 0 0 48-48V128H32zm272-256a16 16 0 0 1 32 0v224a16 16 0 0 1-32 0zm-96 0a16 16 0 0 1 32 0v224a16 16 0 0 1-32 0zm-96 0a16 16 0 0 1 32 0v224a16 16 0 0 1-32 0zM432 32H312l-9.400-18.700A24 24 0 0 0 281.100 0H166.800a23.720 23.720 0 0 0-21.400 13.300L136 32H16A16 16 0 0 0 0 48v32a16 16 0 0 0 16 16h416a16 16 0 0 0 16-16V48a16 16 0 0 0-16-16z"/></svg>Waste</a></li>
      <li><a href="#"><svg viewBox="0 0 352 512"><path d="M205.220 22.090c-7.940-28.780-49.440-30.120-58.440 0C100.010 179.850 0 222.720 0 333.910 0 432.350 78.720 512 176 512s176-79.650 176-178.090c0-111.750-99.790-153.340-146.780-311.820zM176 448c-61.750 0-112-50.250-112-112 0-8.840 7.160-16 16-16s16 7.160 16 16c0 44.110 35.890 80 80 80 8.840 0 16 7.160 16 16s-7.160 16-16 16z"/></svg>Water</a></li>
      <li><a href="#"><svg viewBox="0 0 512 512"><path d="M0 64h40v344h472v40H0zM96 296h52v72H96zM192 152h52v216h-52zM288 216h52v152h-52zM384 104h52v264h-52z"/></svg>Sensors</a></li>
      <li><a href="#"><svg viewBox="0 0 512 512"><path d="M487.400 315.700l-42.600-24.600c4.300-23.200 4.300-47 0-70.200l42.600-24.600c4.900-2.800 7.100-8.600 5.500-14-11.100-35.600-30-67.800-54.700-94.600-3.800-4.100-10-5.100-14.800-2.300L380.800 110c-17.900-15.400-38.500-27.300-60.800-35.100V25.800c0-5.600-3.900-10.500-9.400-11.700-36.700-8.200-74.300-7.800-109.200 0-5.500 1.200-9.400 6.100-9.400 11.700V75c-22.200 7.900-42.800 19.800-60.800 35.100L88.700 85.500c-4.900-2.800-11-1.900-14.800 2.300-24.700 26.700-43.600 58.900-54.700 94.600-1.700 5.400.6 11.200 5.500 14L67.300 221c-4.300 23.200-4.300 47 0 70.200l-42.600 24.600c-4.900 2.800-7.100 8.600-5.500 14 11.100 35.600 30 67.800 54.700 94.600 3.800 4.100 10 5.100 14.800 2.300l42.600-24.600c17.900 15.400 38.500 27.300 60.800 35.100v49.200c0 5.600 3.900 10.500 9.400 11.700 36.700 8.200 74.300 7.800 109.200 0 5.500-1.200 9.400-6.100 9.400-11.700v-49.200c22.200-7.900 42.800-19.800 60.800-35.100l42.600 24.600c4.900 2.800 11 1.900 14.800-2.300 24.700-26.700 43.600-58.900 54.700-94.600 1.500-5.500-.7-11.300-5.600-14.100zM256 336c-44.100 0-80-35.900-80-80s35.900-80 80-80 80 35.900 80 80-35.900 80-80 80z"/></svg>Other</a></li>
      <li class="feedback"><a href="#"><svg viewBox="0 0 512 512"><path d="M511.988 288.900c-.478 17.430-15.217 31.100-32.653 31.100H424v16c0 21.864-4.882 42.584-13.600 61.145l60.228 60.228c12.496 12.497 12.496 32.758 0 45.255-12.498 12.497-32.759 12.496-45.256 0l-54.736-54.736C345.886 467.965 314.351 480 280 480V236c0-6.627-5.373-12-12-12h-24c-6.627 0-12 5.373-12 12v244c-34.351 0-65.886-12.035-90.636-32.108l-54.736 54.736c-12.498 12.497-32.759 12.496-45.256 0-12.496-12.497-12.496-32.758 0-45.255l60.228-60.228C92.882 378.584 88 357.864 88 336v-16H32.666C15.230 320 .491 306.330.013 288.900-.484 270.816 14.028 256 32 256h56v-58.745l-46.628-46.628c-12.496-12.497-12.496-32.758 0-45.255 12.498-12.497 32.758-12.497 45.256 0L141.255 160h229.489l54.627-54.627c12.498-12.497 32.758-12.497 45.256 0 12.496 12.497 12.496 32.758 0 45.255L424 197.255V256h56c17.972 0 32.484 14.816 31.988 32.900zM257 0c-61.856 0-112 50.144-112 112h224C369 50.144 318.856 0 257 0z"/></svg>HabitatOS Feedback</a></li>
    </ul>
  </nav>
</aside>

<main>
  <div class="breadcrumbs"><a href="#">Home</a><span class="sep">›</span><a href="#">Reporting</a><span class="sep">›</span><a href="#">Sociodynamics</a><span class="sep sep-last">›</span>Add Sociodynamic Report</div>

  <form>
    <div class="module">
      <div class="field field-day">
        <label for="day">Mission Day: <i>*</i></label>
        <div class="control"><input class="text wide" id="day" type="text" value="7"><p class="help">Mission Elapsed Day</p></div>
      </div>
      <div class="field field-time">
        <label for="time">Mission Time: <i>*</i></label>
        <div class="control">
          <div class="time-row"><input class="text time" id="time" type="text" value="12:56:14"><button type="button" class="clock" aria-label="Choose a time"><svg viewBox="0 0 512 512" width="28" height="28"><path fill="#565a5e" d="M256 0a256 256 0 1 0 0 512 256 256 0 0 0 0-512zm90 346l-24 30q-9 8-20 1l-82-62q-12-10-12-26V112q0-16 16-16h32q16 0 16 16v160l72 52q11 9 2 22z"/></svg></button><a href="#">Now</a></div>
          <p class="help">Note: You are 2 hours ahead of server time.</p>
        </div>
      </div>
    </div>

    <h2>Sociodynamic Report Entries</h2>
    <table>
      <colgroup><col class="c-astronaut"><col class="c-feeling"><col><col><col><col class="c-delete"></colgroup>
      <thead><tr><th>Astronaut</th><th>Feeling <svg class="tip" viewBox="0 0 18 18" width="18" height="18"><circle cx="9" cy="9" r="8" fill="#666669"/><path d="M6.500 7q.5-3 3-2.500 3 1 1 3.500-1.500 1-1.500 2.500M9 12v2" stroke="#5f6376" stroke-width="1.500" fill="none"/></svg></th><th>Astronaut X is...</th><th>I like about him/her...</th><th>I do not like about him/her...</th><th>Delete?</th></tr></thead>
      <tbody>
        <tr>
          <td><div class="pick"><select aria-label="Astronaut"><option>Jan Twardowski</option></select></div><div class="related"><a href="#" aria-label="Change"><svg width="24" height="23"><use href="#pencil"/></svg></a><a href="#" aria-label="Add"><svg width="20" height="20"><use href="#plus"/></svg></a></div></td>
          <td><div class="feeling"><input aria-label="Feeling" type="text"><span class="mood"><svg><use href="#f-thumb"/></svg></span><button type="button" class="smile" aria-label="Choose emoji"><svg width="28" height="28"><use href="#smile"/></svg></button></div></td>
          <td><textarea aria-label="Astronaut X is"></textarea></td><td><textarea aria-label="I like"></textarea></td><td><textarea aria-label="I do not like"></textarea></td><td></td>
        </tr>
        <tr>
          <td><div class="pick"><select aria-label="Astronaut"><option>José Jiménez</option></select></div><div class="related"><a href="#" aria-label="Change"><svg width="24" height="23"><use href="#pencil"/></svg></a><a href="#" aria-label="Add"><svg width="20" height="20"><use href="#plus"/></svg></a></div></td>
          <td><div class="feeling"><input aria-label="Feeling" type="text"><span class="mood"><svg><use href="#f-grin"/></svg></span><button type="button" class="smile" aria-label="Choose emoji"><svg width="28" height="28"><use href="#smile"/></svg></button></div></td>
          <td><textarea aria-label="Astronaut X is"></textarea></td><td><textarea aria-label="I like"></textarea></td><td><textarea aria-label="I do not like"></textarea></td><td></td>
        </tr>
        <tr>
          <td><div class="pick"><select aria-label="Astronaut"><option>Max Peck</option></select></div><div class="related"><a href="#" aria-label="Change"><svg width="24" height="23"><use href="#pencil"/></svg></a><a href="#" aria-label="Add"><svg width="20" height="20"><use href="#plus"/></svg></a></div></td>
          <td><div class="feeling"><input aria-label="Feeling" type="text"><span class="mood"><svg><use href="#f-astro"/></svg></span><button type="button" class="smile" aria-label="Choose emoji"><svg width="28" height="28"><use href="#smile"/></svg></button></div></td>
          <td><textarea aria-label="Astronaut X is"></textarea></td><td><textarea aria-label="I like"></textarea></td><td><textarea aria-label="I do not like"></textarea></td><td></td>
        </tr>
        <tr>
          <td><div class="pick"><select aria-label="Astronaut"><option>Mark Watney</option></select></div><div class="related"><a href="#" aria-label="Change"><svg width="24" height="23"><use href="#pencil"/></svg></a><a href="#" aria-label="Add"><svg width="20" height="20"><use href="#plus"/></svg></a></div></td>
          <td><div class="feeling"><input aria-label="Feeling" type="text"><span class="mood"><svg><use href="#f-moon"/></svg><svg><use href="#f-dark"/></svg></span><button type="button" class="smile" aria-label="Choose emoji"><svg width="28" height="28"><use href="#smile"/></svg></button></div></td>
          <td><textarea aria-label="Astronaut X is"></textarea></td><td><textarea aria-label="I like"></textarea></td><td><textarea aria-label="I do not like"></textarea></td><td></td>
        </tr>
        <tr>
          <td><div class="pick"><select aria-label="Astronaut"><option>Matt Kowalski</option></select></div><div class="related"><a href="#" aria-label="Change"><svg width="24" height="23"><use href="#pencil"/></svg></a><a href="#" aria-label="Add"><svg width="20" height="20"><use href="#plus"/></svg></a></div></td>
          <td><div class="feeling"><input aria-label="Feeling" type="text"><button type="button" class="smile" aria-label="Choose emoji"><svg width="28" height="28"><use href="#smile"/></svg></button>
            <div class="picker">
              <div class="anchors">
                <button type="button" aria-label="Recent"><svg viewBox="0 0 36 36"><circle cx="18" cy="18" r="16.600"/><path d="M18 6v17M14 18h9"/></svg></button>
                <button type="button" aria-label="Smileys"><svg viewBox="0 0 36 36"><circle cx="18" cy="18" r="16.600"/><path d="M11 21h14q-1 7-7 7t-7-7z"/><circle class="dot" cx="12" cy="13.500" r="2.500"/><circle class="dot" cx="24" cy="13.500" r="2.500"/></svg></button>
                <button type="button" aria-label="Animals"><svg viewBox="0 0 36 36"><path d="M9 3Q18-1 27 3q6-3 7 6 1 8-3 11l-2-1q1 10-7 12H14q-8-2-7-12l-2 1Q1 17 2 9 3 0 9 3zM9 3Q4 8 7 19M27 3q5 5 2 16M18 25v5M14 31q1 4 4 4t4-4"/><path class="dot" d="M14 21q4-3 8 0 1 5-4 6-5-1-4-6z"/><circle class="dot" cx="12" cy="14" r="2"/><circle class="dot" cx="24" cy="14" r="2"/></svg></button>
                <button type="button" aria-label="Food"><svg viewBox="0 0 36 36"><path d="M18 10Q13 7 8 9q-6 2-6 11 1 10 8 15 4 1 8-1 4 2 8 1 7-5 8-15 0-9-6-11-5-2-10 1zM18 10Q18 4 27 3M18 9Q11 7 13 1q5 2 5 8z"/></svg></button>
                <button type="button" aria-label="Activity"><svg viewBox="0 0 36 36"><circle cx="18" cy="18" r="16.600"/><path d="M18 1v34M1 18h34M8 4q10 14 0 28M28 4q-10 14 0 28"/></svg></button>
                <button type="button" class="active" aria-label="Travel"><svg viewBox="0 0 36 36"><path d="M6 14l3-8q1-2 3-2h12q2 0 3 2l3 8M4 15q14-2 28 0l3 3-2 12H3L1 18zM1 11l4 3M35 11l-4 3M6 30v4h4v-4M26 30v4h4v-4"/><circle cx="10" cy="22" r="2.500"/><circle cx="26" cy="22" r="2.500"/></svg></button>
                <button type="button" aria-label="Objects"><svg viewBox="0 0 36 36"><path d="M12 25Q5 19 5 13 6 2 18 1.500 30 2 31 13q0 6-7 12v4H12zM12 29l2 5h8l2-5M10 12l4 5 4-4 4 4 4-5"/></svg></button>
                <button type="button" aria-label="Symbols"><svg viewBox="0 0 36 36"><path d="M0 1.500h16M0 8h16M8 8v8M27 13V2l7 3v4M15 35L3 23q-1-3 3-3 5 1 1 5-7 3-5 8 6 4 12-5M21 34l13-14"/><circle cx="24" cy="13" r="2.600"/><circle cx="23" cy="22" r="2.400"/><circle cx="32" cy="32" r="2.400"/></svg></button>
                <button type="button" aria-label="Flags"><svg viewBox="0 0 36 36"><path d="M2 0l8 36M7 3h15l4 16H11zM24 8h6l5 16H21l-4-5M18 23l6-5"/></svg></button>
              </div>
              <div class="search"><input type="search" placeholder="Search" aria-label="Search"><svg viewBox="0 0 26 26" width="26" height="26"><circle cx="11" cy="10" r="9" fill="none" stroke="#777" stroke-width="2"/><path d="M17 17l8 8" stroke="#777" stroke-width="2.400"/></svg></div>
              <div class="scroll">
                <div class="category">Travel &amp; Places</div>
                <div class="grid">
                  <svg><use href="#e-light"/></svg><svg><use href="#e-hlight"/></svg><svg><use href="#e-vlight"/></svg><svg><use href="#e-barrier"/></svg><svg><use href="#e-stop"/></svg><svg><use href="#e-anchor"/></svg><svg><use href="#e-sail"/></svg><svg><use href="#e-canoe"/></svg><svg><use href="#e-speed"/></svg>
                  <svg><use href="#e-cruise"/></svg><svg><use href="#e-ferry"/></svg><svg><use href="#e-motor"/></svg><svg><use href="#e-tug"/></svg><svg><use href="#e-plane"/></svg><svg><use href="#e-splane"/></svg><svg><use href="#e-depart"/></svg><svg><use href="#e-arrive"/></svg><svg><use href="#e-seat"/></svg>
                  <svg><use href="#e-heli"/></svg><svg><use href="#e-susp"/></svg><svg><use href="#e-cable"/></svg><svg><use href="#e-tram"/></svg><svg><use href="#e-sat"/></svg><svg class="hover"><use href="#e-rocket"/></svg><svg><use href="#e-ufo"/></svg><svg><use href="#e-bell"/></svg><svg><use href="#e-door"/></svg>
                  <svg><use href="#e-bed"/></svg><svg><use href="#e-couch"/></svg><svg><use href="#e-toilet"/></svg><svg><use href="#e-shower"/></svg><svg><use href="#e-bath"/></svg><svg><use href="#e-hour"/></svg><svg><use href="#e-hourf"/></svg><svg><use href="#e-watch"/></svg><svg><use href="#e-alarm"/></svg>
                  <svg><use href="#e-stopw"/></svg><svg><use href="#e-timer"/></svg><svg><use href="#e-mantel"/></svg>
                  <svg viewBox="0 0 44 44"><use href="#face"/><path class="hand" d="M22 22V8"/><use href="#hub"/></svg>
                  <svg viewBox="0 0 44 44"><use href="#face"/><path class="hand" d="M22 22v14"/><path class="hand" d="M22 22V12" transform="rotate(15 22 22)"/><use href="#hub"/></svg>
                  <svg viewBox="0 0 44 44"><use href="#face"/><path class="hand" d="M22 22V8"/><path class="hand" d="M22 22V12" transform="rotate(28 22 22)"/><use href="#hub"/></svg>
                  <svg viewBox="0 0 44 44"><use href="#face"/><path class="hand" d="M22 22v14"/><path class="hand" d="M22 22V12" transform="rotate(30 22 22)"/><use href="#hub"/></svg>
                  <svg viewBox="0 0 44 44"><use href="#face"/><path class="hand" d="M22 22V8"/><path class="hand" d="M22 22V12" transform="rotate(60 22 22)"/><use href="#hub"/></svg>
                  <svg viewBox="0 0 44 44"><use href="#face"/><path class="hand" d="M22 22v14"/><path class="hand" d="M22 22V12" transform="rotate(60 22 22)"/><use href="#hub"/></svg>
                  <svg viewBox="0 0 44 44"><use href="#face"/><path class="hand" d="M22 22V8"/><path class="hand" d="M22 22V12" transform="rotate(90 22 22)"/><use href="#hub"/></svg>
                  <svg viewBox="0 0 44 44"><use href="#face"/><path class="hand" d="M22 22v14"/><path class="hand" d="M22 22V12" transform="rotate(120 22 22)"/><use href="#hub"/></svg>
                  <svg viewBox="0 0 44 44"><use href="#face"/><path class="hand" d="M22 22V8"/><path class="hand" d="M22 22V12" transform="rotate(120 22 22)"/><use href="#hub"/></svg>
                  <svg viewBox="0 0 44 44"><use href="#face"/><path class="hand" d="M22 22v14"/><path class="hand" d="M22 22V12" transform="rotate(152 22 22)"/><use href="#hub"/></svg>
                  <svg viewBox="0 0 44 44"><use href="#face"/><path class="hand" d="M22 22V8"/><path class="hand" d="M22 22V12" transform="rotate(150 22 22)"/><use href="#hub"/></svg>
                  <svg viewBox="0 0 44 44"><use href="#face"/><path class="hand" d="M22 22v14"/><path class="hand" d="M22 22V12" transform="rotate(168 22 22)"/><use href="#hub"/></svg>
                  <svg viewBox="0 0 44 44"><use href="#face"/><path class="hand" d="M22 22V8"/><path class="hand" d="M22 22v10"/><use href="#hub"/></svg>
                  <svg viewBox="0 0 44 44"><use href="#face"/><path class="hand" d="M22 22v14"/><path class="hand" d="M22 22V12" transform="rotate(192 22 22)"/><use href="#hub"/></svg>
                  <svg viewBox="0 0 44 44"><use href="#face"/><path class="hand" d="M22 22V8"/><path class="hand" d="M22 22V12" transform="rotate(210 22 22)"/><use href="#hub"/></svg>
                  <svg viewBox="0 0 44 44"><use href="#face"/><path class="hand" d="M22 22v14"/><path class="hand" d="M22 22V12" transform="rotate(208 22 22)"/><use href="#hub"/></svg>
                  <svg viewBox="0 0 44 44"><use href="#face"/><path class="hand" d="M22 22V8"/><path class="hand" d="M22 22V12" transform="rotate(240 22 22)"/><use href="#hub"/></svg>
                  <svg viewBox="0 0 44 44"><use href="#face"/><path class="hand" d="M22 22v14"/><path class="hand" d="M22 22V12" transform="rotate(240 22 22)"/><use href="#hub"/></svg>
                  <svg viewBox="0 0 44 44"><use href="#face"/><path class="hand" d="M22 22V8"/><path class="hand" d="M22 22V12" transform="rotate(270 22 22)"/><use href="#hub"/></svg>
                  <svg viewBox="0 0 44 44"><use href="#face"/><path class="hand" d="M22 22v14"/><path class="hand" d="M22 22V12" transform="rotate(300 22 22)"/><use href="#hub"/></svg>
                  <svg viewBox="0 0 44 44"><use href="#face"/><path class="hand" d="M22 22V8"/><path class="hand" d="M22 22V12" transform="rotate(300 22 22)"/><use href="#hub"/></svg>
                  <svg viewBox="0 0 44 44"><use href="#face"/><path class="hand" d="M22 22v14"/><path class="hand" d="M22 22V12" transform="rotate(328 22 22)"/><use href="#hub"/></svg>
                  <svg viewBox="0 0 44 44"><use href="#face"/><path class="hand" d="M22 22V8"/><path class="hand" d="M22 22V12" transform="rotate(330 22 22)"/><use href="#hub"/></svg>
                  <svg viewBox="0 0 44 44"><use href="#face"/><path class="hand" d="M22 22v14"/><path class="hand" d="M22 22V12" transform="rotate(346 22 22)"/><use href="#hub"/></svg>
                  <svg viewBox="0 0 44 44"><use href="#m-dark"/></svg>
                  <svg viewBox="0 0 44 44"><use href="#m-dark"/><path class="lit" d="M25 1a21 21 0 0 1 0 42Q43 22 25 1z"/></svg>
                  <svg viewBox="0 0 44 44"><use href="#m-dark"/><path class="lit" d="M21 1h1a21 21 0 0 1 0 42h-1z"/></svg>
                  <svg viewBox="0 0 44 44"><use href="#m-dark"/><path class="lit" d="M20 1h2a21 21 0 0 1 0 42h-2Q0 22 20 1z"/></svg>
                  <svg viewBox="0 0 44 44"><use href="#m-full"/></svg>
                  <svg viewBox="0 0 44 44"><use href="#m-full"/><path class="shade" d="M23 1a21 21 0 0 1 0 42Q43 22 23 1z"/></svg>
                  <svg viewBox="0 0 44 44"><use href="#m-full"/><path class="shade" d="M22 1a21 21 0 0 1 0 42z"/></svg>
                  <svg viewBox="0 0 44 44"><use href="#m-full"/><path class="shade" d="M20 1h2a21 21 0 0 1 0 42h-2Q0 22 20 1z"/></svg>
                  <svg viewBox="0 0 44 44"><path class="lit" d="M25 0q17 4 17 20 0 20-24 24Q44 22 25 0z"/></svg>
                </div>
              </div>
              <div class="preview"><svg><use href="#e-rocket"/></svg><div><p>Rocket</p><p class="short">:rocket:</p></div></div>
            </div></div></td>
          <td><textarea aria-label="Astronaut X is"></textarea></td><td><textarea aria-label="I like"></textarea></td><td><textarea aria-label="I do not like"></textarea></td><td></td>
        </tr>
      </tbody>
    </table>
    <div class="submit-row"><button type="submit" class="primary">Save</button><button type="submit">Save and add another</button><button type="submit">Save and continue editing</button></div>
  </form>
</main>
</div>
</body>
</html>
```
FILE: styles.css
```css
* { box-sizing: border-box; }
body {
  margin: 0;
  height: 100vh;
  overflow: hidden;
  display: flex;
  flex-direction: column;
  background: #f0f0f0;
  color: #333;
  font: 26px/36px Roboto, sans-serif;
}
h1, h2, p, ul { margin: 0; padding: 0; }
ul { list-style: none; }
a { color: #1f5f9f; text-decoration: none; }
button, input, select, textarea { font-family: inherit; margin: 0; }
button { padding: 0; cursor: pointer; }
svg { display: block; }
.sprite { position: absolute; width: 0; height: 0; }

/* browser toolbar */
.toolbar {
  flex: none;
  height: 76px;
  display: grid;
  grid-template-columns: 1139px 1fr 1139px;
  border-top: 2px solid #f2f2f2;
  border-bottom: 2px solid #a0a0a0;
  background: linear-gradient(to right, rgba(0, 0, 0, .09), transparent 520px), linear-gradient(#e5e5e5, #cacaca);
}
.tools { display: flex; padding: 14px 0 0 16px; }
.tool {
  display: flex;
  align-items: center;
  justify-content: center;
  width: 74px;
  height: 44px;
  border: 0;
  border-radius: 7px;
  background: linear-gradient(#fdfdfd, #f1f1f1);
  box-shadow: 0 1px 1px #8c8c8c;
}
.tool-narrow { width: 50px; margin-right: 2px; }
.tool-cloud { margin: 0 16px 0 18px; }
.address {
  position: relative;
  height: 44px;
  margin-top: 14px;
  border-radius: 7px;
  background: linear-gradient(#fdfdfd, #f1f1f1);
  box-shadow: 0 1px 1px #8c8c8c;
  color: #444;
  font: 24px/44px Inter, sans-serif;
  text-align: center;
}
.reload { position: absolute; right: 13px; top: 8px; border: 0; background: none; }
.newtab {
  justify-self: end;
  width: 49px;
  height: 49px;
  margin-top: 23px;
  border: 0;
  border-left: 2px solid #a5a5a5;
  background: #b5b5b5;
  padding-left: 11px;
}

.layout { flex: 1; min-height: 0; display: flex; align-items: flex-start; }

/* sidebar */
.sidebar { flex: none; width: 460px; background: #393c49; }
.brand { padding: 2px 0 29px; background: #25282f; color: #c0c0c0; text-align: center; }
.brand h1 { color: #fff; font-size: 40px; line-height: 48px; font-weight: 400; margin-bottom: 43px; }
.brand p { font-size: 28px; line-height: 42px; }
.welcome { padding-top: 31px; color: #6a6f86; text-align: center; font-size: 24px; }
.welcome b { color: #fff; font-weight: 400; }
.user-links { display: flex; justify-content: center; margin: 20px 0 47px; }
.user-links a { margin-right: 25px; }
.user-links svg { height: 32px; fill: #fff; }
.menu { display: grid; grid-auto-rows: 1fr; }
.menu-main { height: 908px; }
.menu-more { height: 680px; }
.menu a { display: flex; align-items: center; height: 100%; padding: 0 28px 0 35px; color: #c4c5c9; font-size: 28px; }
.menu svg { height: 28px; margin-right: 20px; fill: #c4c5c9; }
.menu .open { background: #25282f; }
.menu .open a { color: #fff; }
.menu .open svg { fill: #fff; }
.menu .open .chevron { height: 8px; margin: 0 0 0 auto; }
.menu .feedback { grid-row: 9; }
.submenu { background: #fff; }
.submenu a { display: block; padding: 4px 0 0 35px; border-bottom: 2px solid #f5f5f5; color: #6a6f86; line-height: 56px; }
.submenu .current { border-left: 8px solid #4a9ae9; padding-left: 27px; color: #4a9ae9; }

/* page */
main { flex: 1; min-width: 0; padding: 13px 49px 0; }
.breadcrumbs { padding-left: 4px; margin-bottom: 33px; color: #6a6f86; }
.sep { margin: 0 12px; }
.sep-last { margin-right: 6px; }
.module { background: #f6f6f6; border-bottom: 2px solid #e2e2e2; }
.field { display: grid; grid-template-columns: 547px 1fr; }
.field label { background: #fff; padding: 35px 24px 0 0; text-align: right; }
.field label i { margin-left: 4px; color: #ccc; font-style: normal; }
.field-day label { border-bottom: 2px solid #eee; }
.field-time label { padding-top: 29px; }
.control { padding: 21px 30px 15px; }
.field-time .control { padding: 15px 30px 24px; }
.text { display: block; height: 66px; padding: 0 20px; border: 2px solid #ccc; border-radius: 8px; background: #fff; color: #4a4a4a; font-size: 28px; }
.wide { width: 1854px; max-width: 100%; }
.help { margin-top: 14px; color: #9fa3aa; font-size: 22px; line-height: 30px; }
.field-time .help { margin-top: 27px; }
.time-row { display: flex; align-items: center; }
.time { width: 208px; border-right: 0; border-radius: 8px 0 0 8px; }
.clock { display: flex; align-items: center; justify-content: center; width: 73px; height: 66px; margin-right: 16px; border: 2px solid #ccc; border-left-color: #aaa; border-radius: 0 8px 8px 0; background: #ecedef; }
h2 { margin: 51px 0 15px; font-size: 44px; line-height: 52px; font-weight: 500; }

table { width: 100%; table-layout: fixed; border-spacing: 0; }
.c-astronaut { width: 625px; }
.c-feeling { width: 334px; }
.c-delete { width: 137px; }
th { height: 75px; padding: 0 0 0 20px; border-left: 2px solid #7c8091; border-bottom: 4px solid #e9edf0; background: #5f6376; color: #eee; font-size: 28px; font-weight: 400; text-align: left; }
.tip { display: inline-block; margin-left: 8px; }
td { height: 216px; padding: 11px 22px 0; border-bottom: 2px solid #f1f1f1; background: #fff; vertical-align: top; }
td:first-child { padding-right: 43px; }
tr:nth-child(odd) td { height: 217px; }
tr:nth-child(even) td { background: #f7f7f7; }
tr:last-child td { height: 214px; border: 0; }
.pick { position: relative; }
.pick::after { content: ""; position: absolute; right: 14px; top: 24px; border: 8px solid transparent; border-top: 10px solid #888; border-bottom: 0; }
select { display: block; width: 100%; height: 60px; padding: 3px 16px 0; appearance: none; border: 2px solid #ccc; border-radius: 8px; background: #fff; color: #444; font-size: 28px; }
.related { display: flex; gap: 4px; padding-left: 2px; margin-top: 12px; }
.feeling { position: relative; }
.feeling > input { display: block; width: 100%; height: 66px; border: 2px solid #d5d5d5; border-radius: 6px; background: #fff; font-size: 28px; }
.mood { position: absolute; left: 25px; top: 16px; display: flex; gap: 3px; }
.mood svg { width: 34px; height: 34px; }
.smile { position: absolute; right: 14px; top: 14px; border: 0; background: none; }
textarea { display: block; width: 100%; height: 180px; border: 2px solid #999; border-top-color: #777; background: #fff; }
textarea::-webkit-resizer { background: linear-gradient(135deg, transparent 48%, #666 48%, #666 57%, transparent 57%, transparent 72%, #666 72%, #666 81%, transparent 81%); }

.submit-row { display: flex; gap: 7px; margin-top: 86px; }
.submit-row button { height: 86px; padding: 0 42px 2px; border: 2px solid #ccc; border-radius: 8px; background: #fff; color: #333; font-size: 32px; }
.submit-row .primary { border-color: #5799d8; background: #5799d8; color: #fff; }

/* emoji picker */
.picker { position: absolute; z-index: 5; left: 248px; top: 51px; width: 676px; border: 2px solid #d9d9d9; border-radius: 10px; background: #fff; color: #222427; font-family: Inter, sans-serif; }
.anchors { display: flex; padding: 0 12px; border-bottom: 2px solid #d9d9d9; }
.anchors button { flex: 1; display: flex; justify-content: center; align-items: flex-start; height: 90px; padding-top: 25px; border: 0; border-bottom: 6px solid transparent; background: none; }
.anchors .active { border-color: #a56ac3; }
.anchors svg { width: 36px; height: 36px; fill: none; stroke: #858585; stroke-width: 2.5; }
.anchors .dot { fill: #858585; stroke: none; }
.anchors .active svg { stroke: #a56ac3; }
.search { position: relative; margin: 12px 12px 0; }
.search input { width: 100%; height: 62px; display: block; padding: 0 20px; border: 2px solid #d9d9d9; border-radius: 10px; font-size: 31px; appearance: none; }
.search input::placeholder { color: #777; }
.search svg { position: absolute; right: 20px; top: 22px; }
.scroll { position: relative; height: 540px; overflow: hidden; padding: 6px 12px 0; }
.category { position: absolute; z-index: 1; left: 12px; right: 12px; top: 0; padding-left: 12px; background: rgba(255, 255, 255, .95); font-size: 31px; line-height: 56px; font-weight: 500; }
.grid { display: grid; grid-template-columns: repeat(9, 72px); }
.grid svg { width: 72px; height: 72px; padding: 14px; }
.grid .hover { border-radius: 50%; background: #f4f4f4; }
.hand { stroke: #2b2937; stroke-width: 2.2; }
.lit { fill: #f9e29c; }
.shade { fill: #4c5964; }
.preview { display: flex; gap: 26px; height: 140px; padding: 36px 36px 0; border-top: 2px solid #d9d9d9; }
.preview svg { width: 74px; height: 76px; }
.preview p { font-size: 27px; line-height: 34px; }
.preview .short { padding-top: 2px; color: #888; font-size: 26px; }
```
